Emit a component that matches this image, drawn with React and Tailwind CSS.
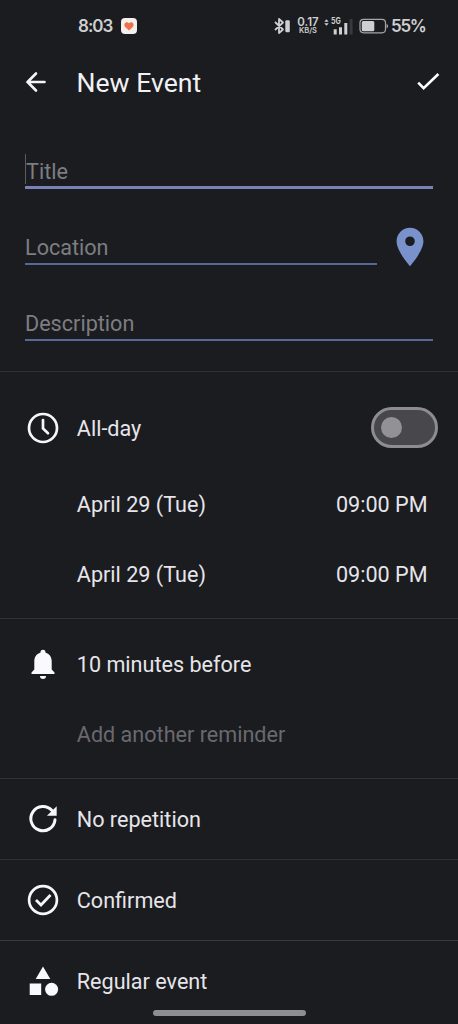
import React from "react";

function StatusBar() {
  return (
    <div className="flex h-[52px] shrink-0 items-center pl-[78px] text-[#cfcfd1]">
      <span className="w-[42px] pt-[1px] text-[17px] font-semibold leading-none tracking-[-1px] font-[Inter,sans-serif]">8:03</span>
      <svg className="ml-[1px] h-4 w-4 shrink-0" viewBox="0 0 16 16">
        <rect width="16" height="16" rx="4" fill="#f5efed" />
        <path d="M8 12.400 4.200 8.900C1.800 6.300 5.100 2.500 8 5.200c2.900-2.700 6.200 1.100 3.800 3.700z" fill="#ee7349" />
      </svg>
      <svg className="ml-[137px] h-5 w-[18px] shrink-0" viewBox="0 0 18 20" fill="none">
        <path d="m1 6 8 7.500L5 17V3l4 3.500L1 14" stroke="#cfcfd1" strokeWidth="1.800" strokeLinejoin="round" />
        <rect x="11.300" y="4.300" width="4.500" height="12" rx="1.200" fill="#cfcfd1" />
      </svg>
      <div className="ml-[4px] flex w-[24px] shrink-0 flex-col items-center font-[Inter,sans-serif] font-semibold">
        <span className="text-[11.5px] leading-[10px]">0.17</span>
        <span className="text-[7.5px] leading-[8px]">KB/S</span>
      </div>
      <svg className="ml-[3px] h-[18px] w-[30px] shrink-0" viewBox="0 0 30 18">
        <path d="m1.300 4.700 2.200-2.500 2.200 2.500zM1.300 6.200l2.200 2.500 2.200-2.500z" fill="#cfcfd1" />
        <text x="8" y="7" fill="#cfcfd1" fontFamily="Inter, sans-serif" fontSize="8.500" fontWeight="700" textLength="9.800" lengthAdjust="spacingAndGlyphs">5G</text>
        <path d="M10.700 12.300h3v5.200h-3zM16 10.300h3v7.200h-3zM21.300 6h3v11.500h-3z" fill="#cfcfd1" />
        <path d="M26.600 2h3v15.500h-3z" fill="#38383d" />
      </svg>
      <svg className="ml-[6px] h-4 w-[30px] shrink-0" viewBox="0 0 30 16" fill="none">
        <rect x="1" y="1.300" width="25.500" height="13.500" rx="3.500" stroke="#a5a5a8" strokeWidth="1.200" />
        <rect x="2.800" y="3" width="12.500" height="10.200" rx="1.500" fill="#cfcfd1" />
        <path d="M27.700 5.700q2.400 2.300 0 4.800z" fill="#cfcfd1" />
      </svg>
      <span className="ml-[2px] pt-[1px] text-[17px] font-semibold leading-none tracking-[-1.300px] font-[Inter,sans-serif]">55%</span>
    </div>
  );
}

function Icon({ children }) {
  return (
    <svg className="h-8 w-8 shrink-0" viewBox="0 0 32 32" fill="none" stroke="#f7f7f9" strokeWidth="2.700" strokeLinecap="round">
      {children}
    </svg>
  );
}

function Row({ icon, label, className = "", children }) {
  return (
    <div className={"flex shrink-0 items-center pl-[27.300px] pr-[20px] text-[21.6px] " + className}>
      <div className="w-[49.500px] shrink-0">{icon}</div>
      <span className="grow whitespace-nowrap pt-[2px]">{label}</span>
      {children}
    </div>
  );
}

export default function App() {
  return (
    <div className="flex h-[1024px] w-[458px] flex-col overflow-hidden bg-[#1b1c20] font-[Roboto,sans-serif] text-[#e6e5ea]">
      <StatusBar />
      <header className="flex h-[60px] shrink-0 items-center pl-[24px] pr-[16px]">
        <svg className="h-6 w-6" viewBox="0 0 24 24" fill="none" stroke="#f4f4f6" strokeWidth="2.600" strokeLinecap="round">
          <path d="M20.500 12H3.500M12 3.500 3.500 12l8.500 8.500" />
        </svg>
        <h1 className="ml-[28.500px] grow pt-[2px] text-[26.6px] leading-none text-[#f1f1f4]">New Event</h1>
        <svg className="h-6 w-[26px]" viewBox="0 0 26 24" fill="none" stroke="#fff" strokeWidth="2.600">
          <path d="m2.200 12.700 5.400 5.400L22.400 4" />
        </svg>
      </header>

      <div className="flex h-[259px] shrink-0 flex-col px-[25px] text-[21.6px] text-[#7d7d82]">
        <div className="flex h-[77px] items-end border-b-[3px] border-[#7981b8]">
          <div className="mb-[2px] h-[30px] w-px bg-[#5b5b60]" />
          <span className="pb-[1px] leading-[26px]">Title</span>
        </div>
        <div className="flex h-[76px] items-end">
          <div className="flex h-[60px] w-[352px] items-end border-b-2 border-[#586796] pb-[2px]">
            <span className="leading-[26px]">Location</span>
          </div>
          <svg className="ml-[10px] -mb-[5px] h-[46px] w-[46px] shrink-0" viewBox="0 0 24 24" fill="#7992cc">
            <path d="M12 2C8.130 2 5 5.130 5 9c0 5.250 7 13 7 13s7-7.750 7-13c0-3.870-3.130-7-7-7zm0 9.500a2.500 2.500 0 1 1 0-5 2.500 2.500 0 0 1 0 5z" />
          </svg>
        </div>
        <div className="flex h-[76px] items-end border-b-2 border-[#586796] pb-[2px]">
          <span className="leading-[26px]">Description</span>
        </div>
      </div>

      <section className="shrink-0 border-t border-[#303135] pt-[18px] pb-[12px]">
        <Row className="h-[76px]" label="All-day" icon={<Icon><circle cx="16" cy="16" r="14" /><path d="M16 8v8.500l5 4.700" /></Icon>}>
          <button role="switch" aria-checked="false" aria-label="All-day" className="-mt-[1px] flex h-[41px] w-[67px] items-center rounded-full border-[3px] border-[#8d8c90] bg-[#48474b] pl-[7px]">
            <span className="h-[21px] w-[21px] rounded-full bg-[#929196]" />
          </button>
        </Row>
        <Row className="h-[76px]" label="April 29 (Tue)"><span className="pt-[2px] pr-[10.500px]">09:00 PM</span></Row>
        <Row className="h-[64px]" label="April 29 (Tue)"><span className="pt-[2px] pr-[10.500px]">09:00 PM</span></Row>
      </section>

      <section className="h-[160px] shrink-0 border-t border-[#303135]">
        <Row
          className="h-[91px]"
          label="10 minutes before"
          icon={
            <Icon>
              <path stroke="none" fill="#fafafc" d="M16 .8c-1.700 0-2.600 1.200-2.600 2.900C9.400 4.800 7.300 8.100 7.300 12.500v8L4.500 23.500v1.600h23v-1.600l-2.800-3v-8c0-4.400-2.100-7.700-6.100-8.800 0-1.700-.9-2.900-2.600-2.900zM13 27a3 3 0 0 0 6 0z" />
            </Icon>
          }
        />
        <Row className="h-[48px] text-[#69696e]" label="Add another reminder" />
      </section>

      <section className="shrink-0 border-t border-[#303135]">
        <Row
          className="h-[80px]"
          label="No repetition"
          icon={
            <Icon>
              <path strokeWidth="3" d="M25 7.600A12.100 12.100 0 1 0 28 16.800" />
              <path stroke="none" fill="#f7f7f9" d="M29.700 3.200v9.600H19.900z" />
            </Icon>
          }
        />
      </section>
      <section className="shrink-0 border-t border-[#303135]">
        <Row className="h-[80px]" label="Confirmed" icon={<Icon><circle cx="16" cy="16" r="13.900" /><path strokeLinecap="butt" d="m9 16 5 5 9.500-10" /></Icon>} />
      </section>
      <section className="shrink-0 border-t border-[#38393e]">
        <Row
          className="h-[69px] pt-[12px]"
          label="Regular event"
          icon={
            <Icon>
              <g stroke="none" fill="#fafafc"><path d="m16 .6 7.300 12.500H8.700zM2.700 17.500h11.500V29H2.700z" /><circle cx="24.600" cy="23.300" r="6.500" /></g>
            </Icon>
          }
        />
      </section>
      <div className="mx-auto h-[5.500px] w-[153px] shrink-0 rounded-full bg-[#8e8e91]" />
    </div>
  );
}
